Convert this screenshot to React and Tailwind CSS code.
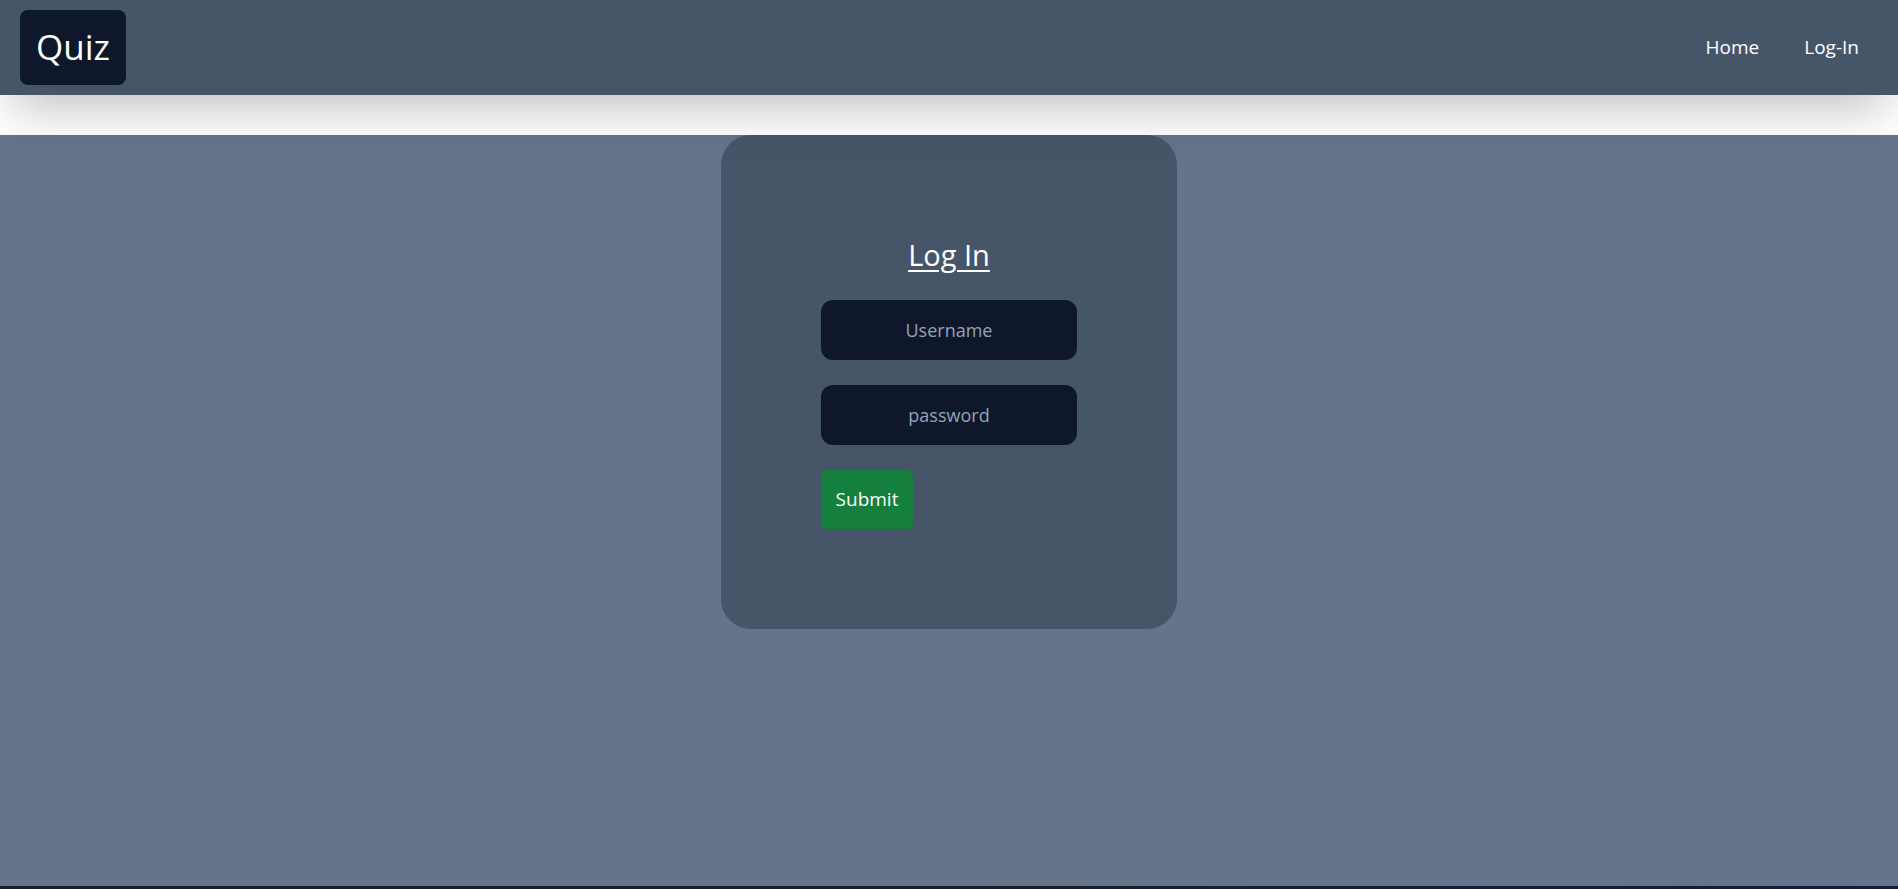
export default function App() {
  return (
    <div className="min-h-[889px] bg-white flex flex-col" style={{ fontFamily: '"Open Sans", "Noto Sans", sans-serif' }}>
      <header className="h-[95px] bg-[#475569] flex items-center justify-between pl-5 pr-[39px] shadow-2xl relative z-10">
        <div className="h-[75px] w-[106px] rounded-lg bg-[#0f172a] flex items-center justify-center text-white text-[35px]">
          Quiz
        </div>
        <nav className="flex items-center gap-[45px] text-white text-[19px]">
          <a href="#">Home</a>
          <a href="#">Log-In</a>
        </nav>
      </header>
      <main className="mt-10 h-[751px] bg-[#64748b] flex justify-center">
        <div className="w-[456px] h-[494px] rounded-[30px] bg-[#475569] flex flex-col items-center pt-[102px]">
          <h1 className="text-white text-[29px] underline underline-offset-4 decoration-2 leading-9">Log In</h1>
          <form className="mt-[27px] w-64 flex flex-col gap-[25px]">
            <input
              type="text"
              placeholder="Username"
              className="h-[60px] w-64 rounded-xl bg-[#0f172a] text-center text-[18px] text-white placeholder-[#94a3b8] outline-none"
            />
            <input
              type="password"
              placeholder="password"
              className="h-[60px] w-64 rounded-xl bg-[#0f172a] text-center text-[18px] text-white placeholder-[#94a3b8] outline-none"
            />
            <button type="button" className="h-[59px] w-[92px] rounded-md bg-[#15803d] text-white text-[19px]">
              Submit
            </button>
          </form>
        </div>
      </main>
      <div className="h-[3px] bg-gradient-to-r from-[#1b1e27] via-[#1b1e27] to-[#161b3a]" />
    </div>
  );
}
